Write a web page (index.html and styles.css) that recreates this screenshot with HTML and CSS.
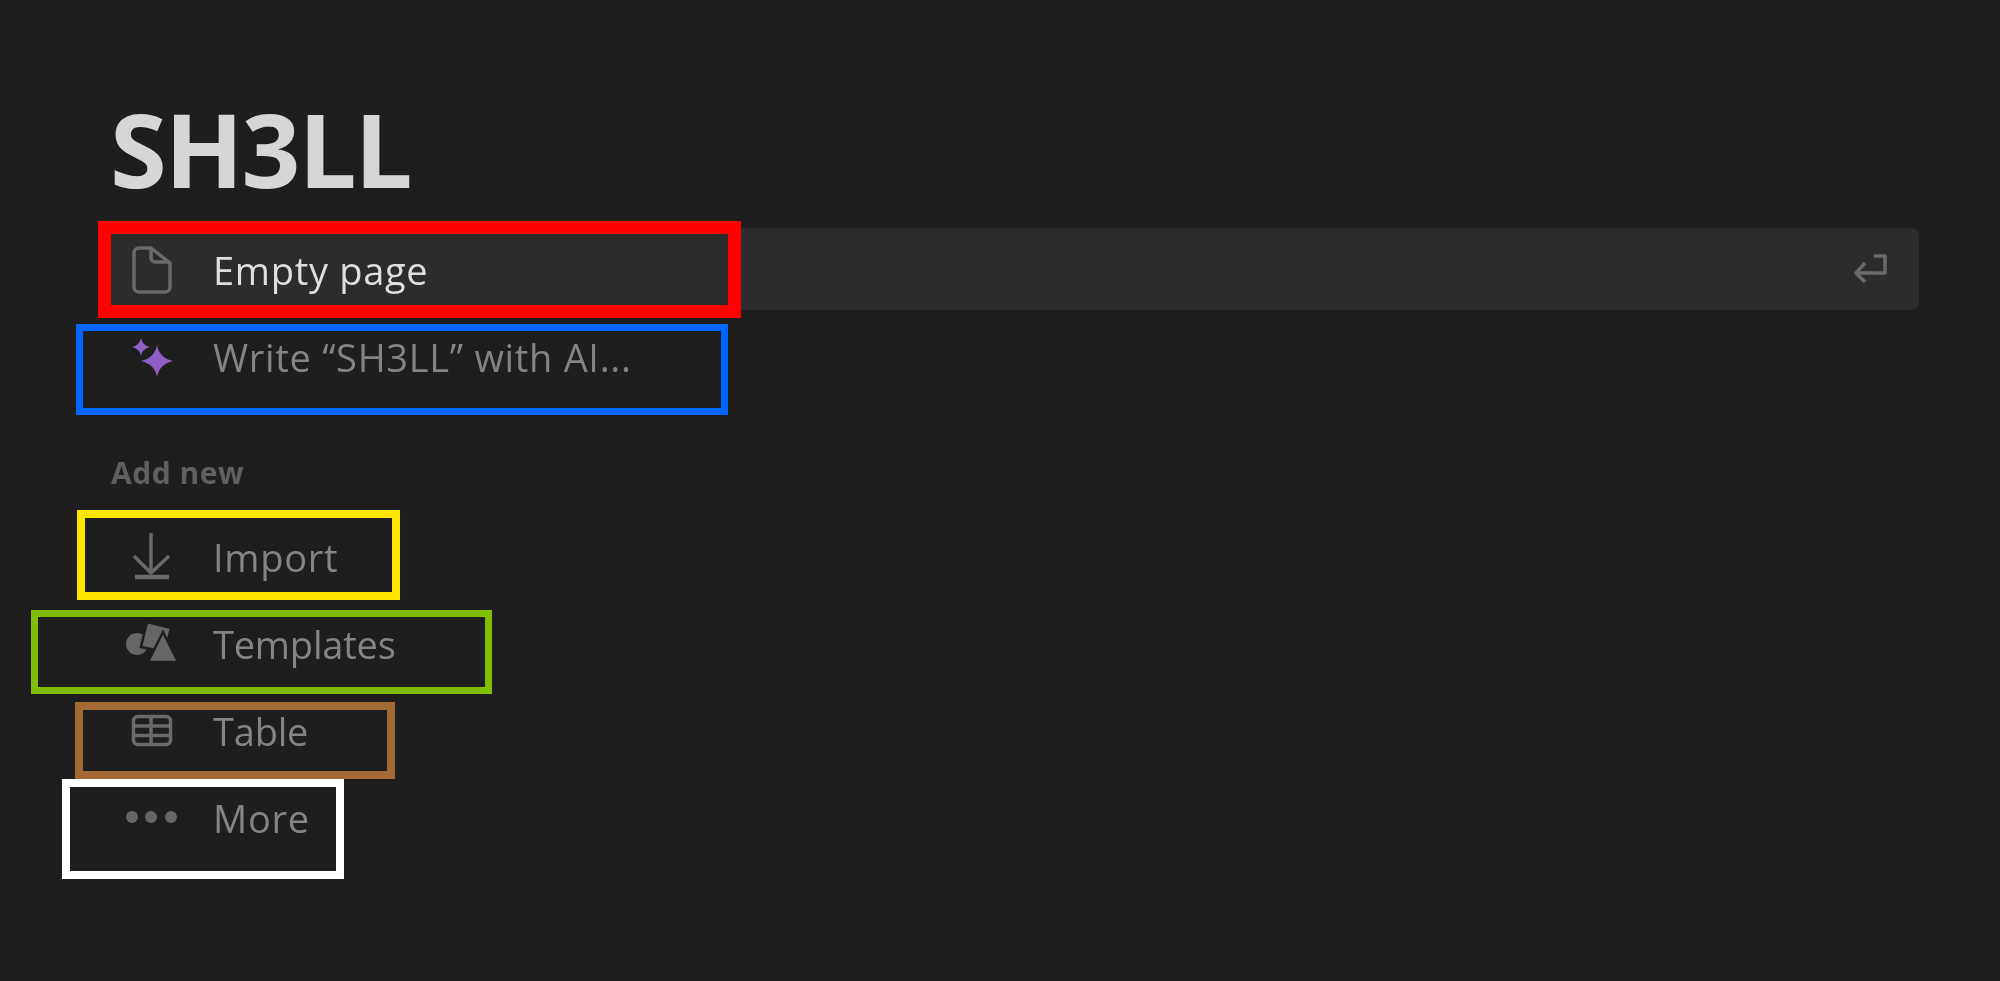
FILE: index.html
```html
<!DOCTYPE html>
<html lang="en">
<head>
<meta charset="utf-8">
<title>SH3LL</title>
<link rel="stylesheet" href="styles.css">
</head>
<body>
<main class="page">
  <h1 class="title">SH3LL</h1>
  <ul class="list">
    <li class="row row-active">
      <svg class="icon" viewBox="0 0 60 60"><path class="line" d="M18 9H30L49 24V48A5 5 0 0 1 44 53H18A5 5 0 0 1 13 48V14A5 5 0 0 1 18 9ZM30 9V19A4 4 0 0 0 34 23H49"/></svg>
      <span class="label">Empty page</span>
      <svg class="enter" viewBox="0 0 40 40"><path class="line" d="M24 7H35V24H6M15 14L6 24L15 33"/></svg>
    </li>
    <li class="row">
      <svg class="icon" viewBox="0 0 60 60"><path class="spark" d="M36 19Q38.500 32 52 35Q38.500 38 36 51Q33.500 38 20 35Q33.500 32 36 19ZM20 12Q21.500 19.500 29 21Q21.500 22.500 20 30Q18.500 22.500 11 21Q18.500 19.500 20 12Z"/></svg>
      <span class="label">Write “SH3LL” with AI...</span>
    </li>
  </ul>
  <h2 class="section">Add new</h2>
  <ul class="list list-lower">
    <li class="row">
      <svg class="icon" viewBox="0 0 60 60"><path class="line" d="M30 6V46M13 29L30 46L48 29"/><path class="base" d="M14 50H48"/></svg>
      <span class="label">Import</span>
    </li>
    <li class="row">
      <svg class="icon" viewBox="0 0 60 60"><circle class="solid" cx="16" cy="30" r="11"/><path class="solid cut" d="M26 8L50 14L44 38L20 33Z"/><path class="solid cut" d="M42 18L27 48H57Z"/></svg>
      <span class="label label-tight">Templates</span>
    </li>
    <li class="row">
      <svg class="icon" viewBox="0 0 60 60"><path class="line" d="M17 15.500H45A4.500 4.500 0 0 1 49.500 20V39A4.500 4.500 0 0 1 45 43.500H17A4.500 4.500 0 0 1 12.500 39V20A4.500 4.500 0 0 1 17 15.500ZM30 15.500V43.500M12.500 25H49.500M12.500 34.500H49.500"/></svg>
      <span class="label label-tight">Table</span>
    </li>
    <li class="row">
      <svg class="icon" viewBox="0 0 60 60"><circle class="solid" cx="11" cy="29" r="6"/><circle class="solid" cx="30" cy="29" r="6"/><circle class="solid" cx="50" cy="29" r="6"/></svg>
      <span class="label">More</span>
    </li>
  </ul>
  <div class="mark mark-red"></div>
  <div class="mark mark-blue"></div>
  <div class="mark mark-yellow"></div>
  <div class="mark mark-green"></div>
  <div class="mark mark-brown"></div>
  <div class="mark mark-white"></div>
</main>
</body>
</html>
```
FILE: styles.css
```css
html, body {
  margin: 0;
  height: 100%;
  background: #1e1e1e;
}
.page {
  position: relative;
  box-sizing: border-box;
  height: 981px;
  padding: 83px 81px 0 98px;
  font-family: "Open Sans", "Noto Sans", "Liberation Sans", sans-serif;
  filter: blur(0.7px);
  overflow: hidden;
}
.title {
  margin: 0 0 15px 12px;
  height: 130px;
  font-size: 103px;
  line-height: 130px;
  font-weight: 700;
  letter-spacing: -2px;
  color: #d6d6d6;
}
.list {
  list-style: none;
  margin: 0;
  padding: 0;
  display: flex;
  flex-direction: column;
  gap: 5px;
}
.row {
  display: flex;
  align-items: center;
  height: 82px;
  padding: 0 29px 0 23px;
  border-radius: 7px;
}
.row-active {
  background: #2c2c2c;
}
.icon {
  flex: none;
  width: 60px;
  height: 60px;
  margin-right: 32px;
}
.enter {
  flex: none;
  width: 40px;
  height: 40px;
  margin-left: auto;
}
.line {
  fill: none;
  stroke: #6a6a6a;
  stroke-width: 3.500;
  stroke-linejoin: round;
}
.base {
  fill: none;
  stroke: #6a6a6a;
  stroke-width: 4.500;
}
.solid {
  fill: #666666;
}
.cut {
  stroke: #1e1e1e;
  stroke-width: 2.500;
}
.spark {
  fill: #8f5fc6;
}
.label {
  position: relative;
  top: 1px;
  font-size: 38px;
  line-height: 50px;
  letter-spacing: 0.700px;
  color: #848484;
}
.list-lower .label {
  top: 0;
}
.list-lower .label-tight {
  letter-spacing: -0.200px;
}
.row-active .label {
  color: #dedede;
}
.section {
  margin: 0 0 0 13px;
  height: 119px;
  box-sizing: border-box;
  padding-top: 58px;
  font-size: 30px;
  line-height: 36px;
  font-weight: 700;
  letter-spacing: 0.500px;
  color: #606060;
}
.mark {
  position: absolute;
  box-sizing: border-box;
  border-style: solid;
  border-width: 8px;
}
.mark-red {
  left: 98px;
  top: 221px;
  width: 643px;
  height: 97px;
  border-width: 13px;
  border-color: #ff0000;
}
.mark-blue {
  left: 76px;
  top: 324px;
  width: 652px;
  height: 91px;
  border-width: 7px;
  border-color: #0066ff;
}
.mark-yellow {
  left: 77px;
  top: 510px;
  width: 323px;
  height: 90px;
  border-color: #ffe600;
}
.mark-green {
  left: 31px;
  top: 610px;
  width: 461px;
  height: 84px;
  border-width: 7px;
  border-color: #7fbf00;
}
.mark-brown {
  left: 75px;
  top: 702px;
  width: 320px;
  height: 77px;
  border-color: #a36a36;
}
.mark-white {
  left: 62px;
  top: 779px;
  width: 282px;
  height: 100px;
  border-color: #ffffff;
}
```
